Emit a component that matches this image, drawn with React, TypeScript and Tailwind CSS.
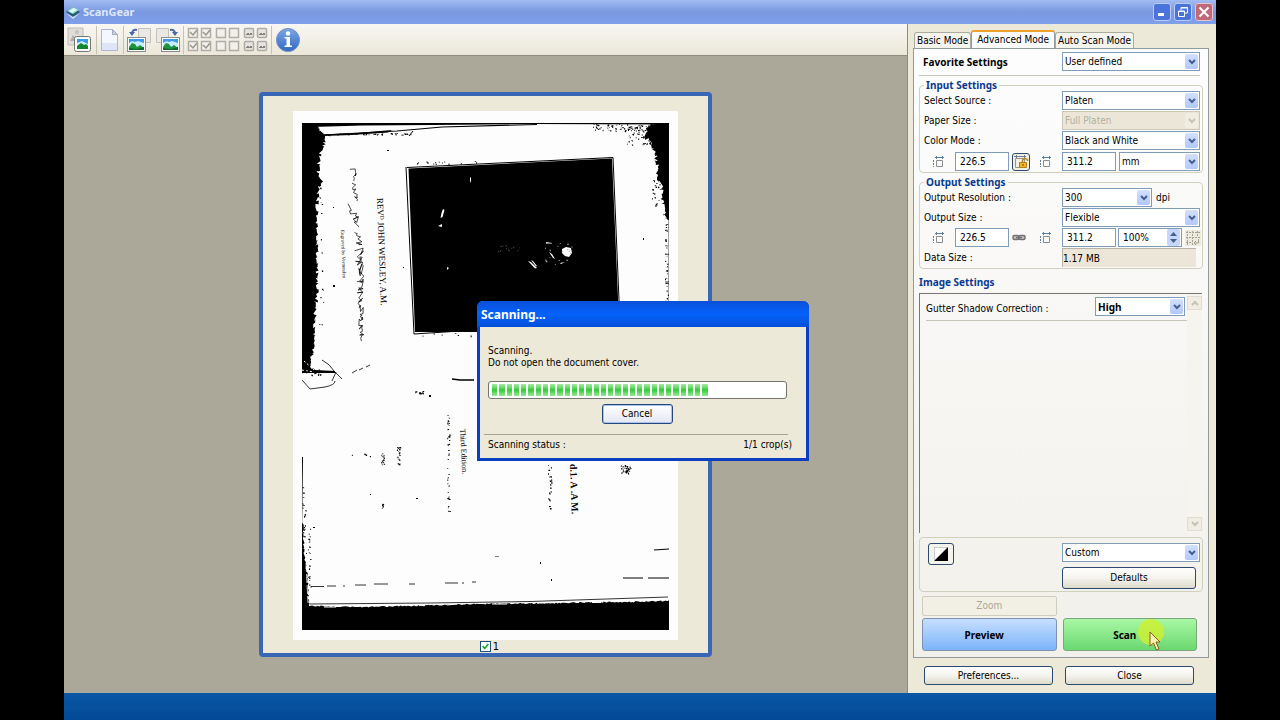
import { useState, type ReactNode } from "react";
import clsx from "clsx";

type Point = [number, number];

// Small seeded generator, so the page noise is the same on each render
const createRandom = (seed: number) => () => {
  seed = (seed * 16807) % 2147483647;
  return seed / 2147483647;
};

const roughen = (points: Point[], amount: number, seed: number) => {
  const random = createRandom(seed);
  const out: string[] = [];
  points.slice(0, -1).forEach(([x, y], i) => {
    const [nx, ny] = points[i + 1];
    const steps = Math.max(1, Math.round(Math.hypot(nx - x, ny - y) / 1.5));
    for (let s = 0; s < steps; s++) {
      const px = x + ((nx - x) * s) / steps + (random() - 0.5) * amount;
      const py = y + ((ny - y) * s) / steps + (random() - 0.5) * amount;
      out.push(`${px.toFixed(1)} ${py.toFixed(1)}`);
    }
  });
  const last = points[points.length - 1];
  out.push(`${last[0]} ${last[1]}`);
  return out.join(" L");
};

const specks = (x: number, y: number, w: number, h: number, count: number, seed: number) => {
  const random = createRandom(seed);
  let d = "";
  for (let i = 0; i < count; i++) {
    const sx = x + random() * w;
    const sy = y + random() * h;
    d += `M${sx.toFixed(1)} ${sy.toFixed(1)}h${(0.6 + random() * 1.4).toFixed(1)}v${(0.6 + random()).toFixed(1)}h-1z`;
  }
  return d;
};

const leftEdge = roughen(
  [[13, 3], [22, 10], [24, 17], [17, 32], [16, 52], [21, 57], [16, 65], [15, 95], [15, 129], [15, 162], [13, 195], [12, 225], [8, 240], [13, 247]],
  4,
  11,
);
const rightEdge = roughen(
  [[350, 0], [344, 12], [350, 22], [353, 29], [356, 49], [360, 69], [363, 92], [366, 97]],
  5,
  29,
);
const bottomEdge = roughen([[7, 483], [60, 484], [110, 483], [178, 481], [260, 480], [320, 479], [366, 478]], 1.4, 5);
const lowerLeftEdge = roughen([[1, 400], [2, 430], [5, 450], [7, 482]], 1.6, 41);

// Three strokes of script, from the thin start to the denser end
const script = [
  roughen([[51, 46], [52, 58]], 6, 103),
  roughen([[52, 62], [55, 78]], 4, 107),
  roughen([[50, 82], [57, 104]], 8, 109),
  roughen([[56, 107], [58, 122]], 7, 113),
  roughen([[57, 126], [59, 160]], 9, 127),
  roughen([[58, 160], [60, 217]], 6, 131),
];

const noise = [
  specks(291, 1, 58, 7, 75, 3),
  specks(325, 6, 25, 16, 50, 7),
  specks(350, 20, 10, 65, 34, 13),
  specks(363, 95, 3, 90, 44, 17),
  specks(0, 246, 18, 6, 24, 19),
  specks(17, 58, 4, 180, 16, 23),
  specks(20, 10, 90, 2, 40, 31),
  specks(145, 284, 2, 105, 38, 37),
  specks(79, 330, 3, 14, 14, 43),
  specks(95, 320, 3, 22, 18, 47),
  specks(80, 378, 2, 7, 6, 53),
  specks(246, 340, 3, 47, 26, 59),
  specks(319, 342, 9, 8, 34, 61),
  specks(6, 405, 2, 60, 22, 67),
  specks(0, 360, 3, 60, 20, 71),
  specks(50, 330, 20, 3, 4, 73),
  specks(113, 267, 8, 4, 14, 79),
  specks(120, 210, 50, 3, 6, 83),
  specks(115, 38, 60, 3, 16, 89),
].join("");

const ScannedPage = () => (
  <svg viewBox="0 0 367 507" className="block w-full" role="img" aria-label="Scanned page">
    <rect width="367" height="507" fill="#fefdfe" />
    {/* dark borders of the glass */}
    <path d={`M0 0H13L${leftEdge} L33 248 V250 H0z`} />
    <path d={`M367 0 L${rightEdge} L367 97z`} />
    <path d={`M0 507 V482 L${bottomEdge} L367 477 V507z`} />
    <path d={`M0 334 H1 L${lowerLeftEdge} L7 490 H0z`} />
    <path d="M0 0H367V1.4L230 1 130 2 60 2.5 10 4z" />
    <path d="M12 8L20 11.5 55 10 90 7 86 9.5 50 12 21 13z" />
    <g fill="none" stroke="#000">
      <path d="M20 12L95 8 140 4 235 1.5" strokeWidth="1.2" />
      <path d="M107 13l4-5" />
      <path d="M366.5 60V182" strokeWidth=".6" opacity=".6" />
      <path d="M366.5 480V506" />
      <path d="M20 237q8 4 12 11l8 8M33 258q0 4-10 6l-15 2-8-9M50 250l5-3M57 247l4-2M64 244l4-2M34 249l-4 9" strokeWidth=".8" />
      <path d="M0 247l12 2M2 238l10 9" stroke="#fff" strokeDasharray="2 2" />
      <path d="M150 256l8 1h14" strokeWidth="1.5" />
      <path d="M9 463.5h13M25 463h9M41 463h2M53 462h11M72 461h14M107 461h6M143 460h13M160 460h2M170 459h4" strokeWidth=".8" />
      <path d="M321 455h20M346 455h21M352 427l15-1" />
      <path d="M4 440l2 40" stroke="#fff" strokeWidth=".8" strokeDasharray="9 2" />
      <path d="M8 481l120-1 100-1.5 138-4.5" strokeWidth=".8" />
      <path d="M22 484h12M60 483h8M145 482l10-1M190 481h15M290 479.5h9M310 478l40-1" stroke="#fff" />
    </g>
    {/* portrait plate */}
    <path d="M103 43L313 33 320 212 111 212z" fill="#fefdfe" />
    <path d="M105 44.500l206-10 7.500 178M104 44l8 167 62-4" fill="none" stroke="#000" />
    <path d="M106.5 45.5L310 35.5 317.5 209 113 209z" />
    <g fill="#fff">
      <path d="M141 86l1.5 1-2 7-2 1 1-5zM138 102l2-1v3l-4-1zM168 54l1 1v5l-1-2zM145 144l2 1-2 2z" />
      <path d="M260 126l4-2 5 1 1 5-3 4-4-1-3-3zM226 138l3 1 6 6-2 .5zM229 137l2 1 4 5-1 .5zM247 129l3 2 3 5-2-1zM258 140l5-1-4 2zM244 119l6 1v.6h-6z" />
    </g>
    <path d={specks(196, 122, 22, 8, 14, 97)} fill="#444" />
    <path d={specks(243, 118, 27, 24, 16, 101)} fill="#aaa" />
    <path d={noise} />
    {/* handwriting */}
    {script.map((stroke) => (
      <path key={stroke} d={`M${stroke}`} fill="none" stroke="#000" strokeWidth=".7" />
    ))}
    <g className="font-['Liberation_Serif',serif]">
      <text transform="translate(75 75) rotate(88)" fontSize="9">REVᴰ JOHN WESLEY, A.M.</text>
      <text transform="translate(39 107) rotate(88)" fontSize="5">Engraved by Vermeulen</text>
      <text transform="translate(158 306) rotate(87)" fontSize="8">Third Edition.</text>
      <text transform="translate(268 341) rotate(88)" fontSize="10" fontWeight="bold">d.1. A  .A  M.</text>
    </g>
    <path d="M31 84h1v1h-1zM31 162h2v2h-2zM85 27h2v1h-2zM101 144h1v1h-1zM127 272h2v2h-2zM193 433h4v.6h-4zM238 439h1v2h-1zM249 456h1v2h-1zM11 404h2v1h-2zM4 430h1v1h-1zM68 371h1v1h-1zM114 375h2v1h-2zM341 115h1v2h-1z" />
  </svg>
);

const MiniPicture = ({ x, y }: { x: number; y: number }) => (
  <g transform={`translate(${x} ${y})`}>
    <rect x=".5" y=".5" width="18" height="14" fill="#fff" stroke="#8c8c8c" />
    <rect x="2" y="2" width="15" height="11" fill="#3c9ae6" />
    <path d="M2 6q3-3 6-1l3-1 6 2v4H2z" fill="#c9ecfb" />
    <path d="M2 10l3-4 3 1 2 3 3-2 4 3v2H2z" fill="#1d9440" />
    <path d="M2 13v-2l8 1 7-2v3z" fill="#0c6a2c" />
  </g>
);

const PreviewIcon = () => (
  <svg width="26" height="28" viewBox="0 0 26 28" fill="none">
    <path d="M1 2h15v17H1z" fill="#dfdcda" stroke="#c0bbb8" />
    <path d="M3 15l3-6 3 4 2-2 4 4z" fill="#b3adab" />
    <circle cx="10" cy="6" r="2" fill="#c5c0be" />
    <rect x="7.5" y="10.5" width="16" height="15" rx="2" fill="#fff" stroke="#777" />
    <path d="M10 13h11v10H10z" fill="#3b9ae5" />
    <path d="M10 17l5-2 6 3v5H10z" fill="#cdeafa" />
    <path d="M10 20l4-3 3 2 2-1 2 2v3H10z" fill="#13862f" />
  </svg>
);

const PageIcon = () => (
  <svg width="20" height="24" viewBox="0 0 20 24" fill="none">
    <path d="M1.500 1.500h11l5 5v16h-16z" fill="#f5f7ff" stroke="#b0b7cb" />
    <path d="M2 15h15v7H2z" fill="#dfe5f8" />
    <path d="M12.500 1.500v5h5z" fill="#c7d0ec" stroke="#a3abc4" />
  </svg>
);

const RotateIcon = ({ flip }: { flip?: boolean }) => (
  <svg width="25" height="26" viewBox="0 0 25 26" fill="none">
    <g transform={flip ? "translate(25 0) scale(-1 1)" : undefined}>
      <path d="M11.5 1.5h12v14h-12z" fill="#e9e8e6" stroke="#c4c1bb" />
      <path d="M10 3Q5 2 5 7" stroke="#4966a5" strokeWidth="2" />
      <path d="M2 5l3 4 3-4z" fill="#4966a5" />
    </g>
    <MiniPicture x={flip ? 6 : 0} y={10} />
  </svg>
);

const GridIcon = ({ kind }: { kind: "check" | "empty" | "filled" }) => (
  <svg width="25" height="26" viewBox="0 0 25 26" fill="none" stroke="#b0ada6">
    {[1, 14].map((y) =>
      [1, 14].map((x) => (
        <g key={`${x}-${y}`} transform={`translate(${x} ${y})`}>
          <rect x=".5" y=".5" width="9" height="9" rx={kind === "filled" ? 1 : 0} fill={kind === "filled" ? "#e6e4de" : "#f2f0ea"} strokeWidth="1.5" />
          {kind === "check" && <path d="M2 4l3 3 4-5" stroke="#98958e" strokeWidth="1.5" />}
          {kind === "filled" && <path d="M2 6.500h6M3 5.500h2M6 5.500h2" stroke="#85827b" />}
        </g>
      )),
    )}
  </svg>
);

const InfoIcon = () => (
  <svg width="26" height="26" viewBox="0 0 26 26">
    <defs>
      <linearGradient id="info" x1="0" y1="0" x2="0" y2="1">
        <stop offset="0" stopColor="#7fa6e4" />
        <stop offset="1" stopColor="#2f68c4" />
      </linearGradient>
    </defs>
    <circle cx="13" cy="13" r="11.5" fill="url(#info)" stroke="#6d8fc6" />
    <circle cx="13" cy="6.5" r="2.2" fill="#fff" />
    <path d="M9.5 10h5.500v8.500h2V20H9.500v-1.500h2v-7h-2z" fill="#fff" />
  </svg>
);

const SizeIcon = () => (
  <svg width="12" height="13" viewBox="0 0 12 13" fill="none" stroke="#8a8f94">
    <path d="M4.500 5.500h6v6h-6z" />
    <path d="M3 2.500h9" stroke="#5d7f99" />
    <path d="M4.500 1v3M10.500 1v3" stroke="#5d7f99" />
    <path d="M1.500 5v7" stroke="#5d7f99" strokeDasharray="2 1" />
  </svg>
);

const ChainIcon = () => (
  <svg width="14" height="8" viewBox="0 0 14 8" fill="none" stroke="#717171" strokeWidth="1.5">
    <rect x="1" y="1.5" width="6" height="4" rx="1.5" fill="#c5c5c5" />
    <rect x="7" y="1.5" width="6" height="4" rx="1.5" fill="#c5c5c5" />
    <path d="M4 3.500h6" />
  </svg>
);

const Separator = () => <span className="h-7 w-px bg-[#c5c2b6]" />;

const ToolButton = ({ label, children }: { label: string; children: ReactNode }) => (
  <button type="button" aria-label={label} className="flex items-center justify-center">
    {children}
  </button>
);

const Toolbar = () => (
  <div className="flex h-8 items-center gap-[3px] border-b border-[#8f8b7e] bg-linear-to-b from-[#f8f7f2] to-[#ebe7d9] pl-[3px]">
    <ToolButton label="Preview thumbnails"><PreviewIcon /></ToolButton>
    <Separator />
    <ToolButton label="Clear page"><PageIcon /></ToolButton>
    <Separator />
    <ToolButton label="Rotate left"><RotateIcon /></ToolButton>
    <ToolButton label="Rotate right"><RotateIcon flip /></ToolButton>
    <Separator />
    <ToolButton label="Check all"><GridIcon kind="check" /></ToolButton>
    <ToolButton label="Uncheck all"><GridIcon kind="empty" /></ToolButton>
    <ToolButton label="Select all crops"><GridIcon kind="filled" /></ToolButton>
    <Separator />
    <ToolButton label="Information"><InfoIcon /></ToolButton>
  </div>
);

const TitleBar = () => (
  <header className="flex h-6 items-center gap-0.5 bg-linear-to-b from-[#a3bbf2] via-[#7a98e0] to-[#7f9fec] px-px">
    <svg width="16" height="16" viewBox="0 0 16 16">
      <path d="M1 8l7-5 7 5-7 5z" fill="#2a5b73" />
      <path d="M2 7l6-4 6 3-6 4z" fill="#8fd6c9" />
      <path d="M4 7l5-3 3 2-5 3z" fill="#e5fff5" />
      <path d="M1 9l7 4 7-4-7 6z" fill="#cfe0ef" />
    </svg>
    <h1 className="flex-1 font-['Noto_Sans',sans-serif] text-[11px] font-bold text-[#dce6fb]">ScanGear</h1>
    <div className="flex gap-[3px]">
      <button type="button" aria-label="Minimize" className="flex size-[18px] items-end rounded-[3px] border border-[#b9cdf8] bg-[#4a74dc] p-1">
        <span className="h-[3px] w-1.5 bg-white" />
      </button>
      <button type="button" aria-label="Restore" className="flex size-[18px] items-center justify-center rounded-[3px] border border-[#b9cdf8] bg-[#4a74dc]">
        <svg width="12" height="12" viewBox="0 0 12 12" fill="none" stroke="#fff">
          <path d="M4 4V1.5h6.500V7H8M4 2h6.500M1.500 5h6v5.500h-6zM1.500 5.500h6" />
        </svg>
      </button>
      <button type="button" aria-label="Close window" className="mr-0.5 flex size-[18px] items-center justify-center rounded-[3px] border border-[#e3c5d3] bg-[#bf6a78]">
        <svg width="12" height="12" viewBox="0 0 12 12" stroke="#fff" strokeWidth="2">
          <path d="M1.5 1.5l9 9M10.5 1.5l-9 9" />
        </svg>
      </button>
    </div>
  </header>
);

interface SelectProps {
  id: string;
  label?: string;
  options: string[];
  disabled?: boolean;
  className?: string;
}

const Select = ({ id, label, options, disabled, className }: SelectProps) => (
  <div className={clsx("relative h-[19px]", className)}>
    <select
      id={id}
      aria-label={label}
      disabled={disabled}
      className={clsx(
        "h-full w-full appearance-none border pl-0.5 pr-4",
        disabled ? "border-[#cbc8b8] bg-[#ece6d8] text-[#b4af9f]" : "border-[#7f9db9] bg-white",
      )}
    >
      {options.map((option) => (
        <option key={option}>{option}</option>
      ))}
    </select>
    <span
      className={clsx(
        "pointer-events-none absolute inset-y-0.5 right-0.5 flex w-[13px] items-center justify-center rounded-xs",
        disabled ? "bg-[#f0ede2]" : "bg-linear-to-b from-[#d3e0fe] to-[#b3c8f8]",
      )}
    >
      <svg width="8" height="6" viewBox="0 0 8 6" fill="none" stroke={disabled ? "#c6c2b4" : "#44618f"} strokeWidth="2">
        <path d="M1 1l3 3 3-3" />
      </svg>
    </span>
  </div>
);

const Row = ({ id, label, children }: { id: string; label: string; children: ReactNode }) => (
  <div className="flex h-[19px] items-center">
    <label htmlFor={id} className="w-[142px] pl-1">{label}</label>
    {children}
  </div>
);

const Group = ({ title, children }: { title: string; children: ReactNode }) => (
  <fieldset className="rounded-sm border border-[#d0d0bf]">
    <legend className="ml-1 px-0.5 font-['Noto_Sans',sans-serif] text-[10px] leading-[10px] font-bold text-[#0a3a8f]">{title}</legend>
    <div className="flex flex-col gap-px py-px">{children}</div>
  </fieldset>
);

const SizeInput = ({ label, value }: { label: string; value: string }) => (
  <input aria-label={label} defaultValue={value} className="h-[19px] w-[54px] border border-[#7f9db9] bg-white pl-1" />
);

const xpButton =
  "flex items-center justify-center rounded-[3px] border border-[#2c4a6b] bg-linear-to-b from-white via-[#f4f3ee] to-[#dedacb]";

const tabs = ["Basic Mode", "Advanced Mode", "Auto Scan Mode"];

const SettingsPanel = () => {
  const [activeTab, setActiveTab] = useState("Advanced Mode");

  return (
    <aside className="flex w-[309px] flex-col border-l border-[#8f8b7e] bg-[#ece9d8] pt-1.5 pr-[7px] pb-2 pl-[5px]">
      <div role="tablist" className="flex h-[18px] items-end px-px">
        {tabs.map((tab) => (
          <button
            key={tab}
            type="button"
            role="tab"
            aria-selected={tab === activeTab}
            onClick={() => setActiveTab(tab)}
            className={clsx(
              "rounded-t-[3px] border border-b-0 whitespace-nowrap",
              tab === activeTab
                ? "h-[18px] border-[#919b9c] border-t-2 border-t-[#f0a02c] bg-[#fcfcfe] px-[5px]"
                : "h-4 border-[#a9ab9f] bg-[#f4f3ec] px-0.5",
            )}
          >
            {tab}
          </button>
        ))}
      </div>

      <div className="flex flex-1 flex-col border border-[#919b9c] bg-linear-to-b from-[#fdfdfe] to-[#f2f0ea] px-[5px] pt-[3px] pb-1.5">
        <div className="mr-[3px] flex items-center border-b border-[#c9c7ba] pb-1">
          <label htmlFor="favorite" className="w-[143px] pl-1 font-['Noto_Sans',sans-serif] text-[10px] font-bold">Favorite Settings</label>
          <Select id="favorite" options={["User defined"]} className="flex-1" />
        </div>

        <div className="mt-1 flex flex-col gap-1">
          <Group title="Input Settings">
            <Row id="source" label="Select Source :"><Select id="source" options={["Platen"]} className="mr-0.5 flex-1" /></Row>
            <Row id="paper" label="Paper Size :"><Select id="paper" options={["Full Platen"]} disabled className="mr-0.5 flex-1" /></Row>
            <Row id="color" label="Color Mode :"><Select id="color" options={["Black and White", "Grayscale", "Color"]} className="mr-0.5 flex-1" /></Row>
            <div className="flex items-center pt-px">
              <div className="flex w-[142px] items-center gap-[3px] pl-3">
                <SizeIcon />
                <span className="ml-2"><SizeInput label="Input width" value="226.5" /></span>
                <button type="button" aria-label="Change aspect ratio" className="flex size-[18px] items-center justify-center rounded-[3px] border border-[#2c4a6b] bg-[#f4efe0]">
                  <svg width="16" height="16" viewBox="0 0 16 16" fill="none" stroke="#77736a">
                    <path d="M2.5 4.5h9v9h-9z" stroke="#9a968c" />
                    <path d="M1 2.5h12M3.500 1v3M11.500 1v3" stroke="#6f7d8c" />
                    <path d="M9.500 8V6q2.500-3 5 0v1" stroke="#b8861a" strokeWidth="1.5" />
                    <path d="M6.5 8.5h7v5h-7z" fill="#f2b42b" stroke="#b37d10" />
                    <path d="M10 10v2" stroke="#6e4d05" />
                  </svg>
                </button>
                <span className="ml-1.5"><SizeIcon /></span>
              </div>
              <SizeInput label="Input height" value="311.2" />
              <Select id="unit" label="Unit" options={["mm", "inches", "pixels"]} className="mr-0.5 ml-[3px] flex-1" />
            </div>
          </Group>

          <Group title="Output Settings">
            <Row id="resolution" label="Output Resolution :">
              <Select id="resolution" options={["300", "600"]} className="w-[90px]" />
              <span className="pl-1">dpi</span>
            </Row>
            <Row id="size" label="Output Size :"><Select id="size" options={["Flexible"]} className="mr-0.5 flex-1" /></Row>
            <div className="flex items-center">
              <div className="flex w-[142px] items-center gap-[3px] pl-3">
                <SizeIcon />
                <span className="ml-2"><SizeInput label="Output width" value="226.5" /></span>
                <span className="w-[18px]"><ChainIcon /></span>
                <span className="ml-1.5"><SizeIcon /></span>
              </div>
              <SizeInput label="Output height" value="311.2" />
              <div className="ml-0.5 flex h-[19px] w-16 items-center border border-[#7f9db9] bg-white pr-px">
                <input aria-label="Scale" defaultValue="100%" className="w-0 flex-1 pl-1" />
                <span className="flex w-[13px] flex-col items-center gap-[3px] rounded-xs bg-[#c6d6fc] py-[3px]">
                  <button type="button" aria-label="Increase scale"><svg className="block" width="7" height="4" viewBox="0 0 7 4"><path d="M0 4l3.5-4L7 4z" fill="#44618f" /></svg></button>
                  <button type="button" aria-label="Decrease scale"><svg className="block" width="7" height="4" viewBox="0 0 7 4"><path d="M0 0l3.5 4L7 0z" fill="#44618f" /></svg></button>
                </span>
              </div>
              <button type="button" aria-label="Swap dimensions" className="ml-[3px] flex size-4 items-center justify-center bg-[#ece9dd]">
                <svg width="16" height="16" viewBox="0 0 16 16" fill="none" stroke="#a5a195">
                  <path d="M1 2.5h14M1 7.500h14M1 12.500h6M2.500 1v14M7.500 1v14M12.500 1v6" strokeDasharray="2 1" />
                  <path d="M13.5 9v4h-4M11 11l-2 2 2 2" />
                </svg>
              </button>
            </div>
            <Row id="data" label="Data Size :">
              <output id="data" className="mr-1.5 h-[19px] flex-1 border-t border-l border-[#b8b4a4] bg-[#ece6d8] leading-[19px]">1.17 MB</output>
            </Row>
          </Group>
        </div>

        <h2 className="mt-1.5 mb-[3px] font-['Noto_Sans',sans-serif] text-[10px] leading-[15px] font-bold text-[#0a3a8f]">Image Settings</h2>
        <div className="mr-px flex min-h-40 flex-1 border-t border-l border-[#78776f]">
          <div className="flex-1 pl-1.5 pt-[3px]">
            <div className="flex items-center border-b border-[#c9c7ba] pb-1">
              <label htmlFor="gutter" className="flex-1 pt-1">Gutter Shadow Correction :</label>
              <Select id="gutter" options={["High", "Medium", "Low", "None"]} className="mr-0.5 w-[90px] font-['Noto_Sans',sans-serif] font-bold" />
            </div>
          </div>
          <div className="flex w-[15px] flex-col justify-between bg-[#f5f4ef] py-0.5">
            <button type="button" aria-label="Scroll up" className="flex h-3.5 items-center justify-center border border-[#e0ddd0] bg-[#f0ede2]">
              <svg width="8" height="6" viewBox="0 0 8 6" fill="none" stroke="#c6c2b4" strokeWidth="2"><path d="M1 5l3-3 3 3" /></svg>
            </button>
            <button type="button" aria-label="Scroll down" className="flex h-3.5 items-center justify-center border border-[#e0ddd0] bg-[#f0ede2]">
              <svg width="8" height="6" viewBox="0 0 8 6" fill="none" stroke="#c6c2b4" strokeWidth="2"><path d="M1 1l3 3 3-3" /></svg>
            </button>
          </div>
        </div>

        <div className="mt-1 flex items-start rounded-sm border border-[#d0d0bf] pt-[5px] pb-0.5">
          <div className="w-[142px] pl-2">
            <button type="button" aria-label="Threshold" className="flex h-[22px] w-[26px] items-center justify-center rounded-[3px] border border-[#2c4a6b] bg-[#f4f3ee]">
              <svg width="14" height="14" viewBox="0 0 14 14"><path d="M0 0h14v14H0z" fill="#fff" /><path d="M14 0v14H0z" /><path d="M0 14V0h14" fill="none" stroke="#999" /></svg>
            </button>
          </div>
          <div className="flex flex-1 flex-col gap-[5px]">
            <Select id="preset" label="Preset" options={["Custom"]} className="mr-0.5" />
            <button type="button" className={clsx(xpButton, "mr-1.5 h-[22px]")}>Defaults</button>
          </div>
        </div>

        <div className="mt-1 mr-1.5 ml-[3px] grid grid-cols-2 gap-x-1.5 gap-y-0.5">
          <button type="button" disabled className="col-start-1 h-5 rounded-xs border border-[#cfcdbd] bg-[#f2f0e4] text-[#aaa797]">Zoom</button>
          <button type="button" className="col-start-1 h-[33px] rounded-[3px] border border-[#7f93b0] bg-linear-to-b from-[#c6dffd] to-[#7db3fb] pr-2.5 font-['Noto_Sans',sans-serif] text-[10px] font-bold">Preview</button>
          <button type="button" className="relative h-[33px] rounded-[3px] border border-[#79a77b] bg-linear-to-b from-[#a9f7a5] to-[#6ad870] pr-2.5 font-['Noto_Sans',sans-serif] text-[10px] font-bold">
            <span className="absolute top-0 right-8 size-[26px] rounded-full bg-[#d0f02c]/80" />
            <span className="relative">Scan</span>
            <svg className="absolute top-3 right-[35px]" width="12" height="20" viewBox="0 0 12 20">
              <path d="M1 1v14l3.5-3 3 7 2.500-1-3-7h4z" fill="#fbf3b0" stroke="#8a5a28" />
            </svg>
          </button>
        </div>
      </div>

      <div className="mt-2 mr-[15px] ml-[11px] grid grid-cols-2 gap-x-3">
        <button type="button" className={clsx(xpButton, "h-[19px]")}>Preferences...</button>
        <button type="button" className={clsx(xpButton, "h-[19px]")}>Close</button>
      </div>
    </aside>
  );
};

const ScanningDialog = () => (
  <section role="dialog" aria-labelledby="dialog-title" className="absolute top-[301px] left-[477px] w-[332px] rounded-t-md border-[3px] border-t-0 border-[#0b3fc0] bg-[#ece9d8]">
    <h2 id="dialog-title" className="-mx-[3px] h-[26px] rounded-t-md bg-linear-to-b from-[#0a4fd8] via-[#0562fb] to-[#0350d8] pl-1 font-['Noto_Sans',sans-serif] text-xs leading-[28px] font-bold text-white">
      Scanning...
    </h2>
    <div className="px-2 pt-[18px] pb-1.5">
      <p className="leading-3">Scanning.<br />Do not open the document cover.</p>
      <div className="mt-3 mr-[11px] h-[18px] rounded-[3px] border border-[#75756f] bg-white px-[3px] py-0.5" role="progressbar" aria-label="Scan progress" aria-valuenow={74}>
        <div className="flex h-full w-[74%] gap-0.5">
          {Array.from({ length: 30 }, (_, i) => (
            <span key={i} className="flex-1 bg-linear-to-b from-[#a6eba6] via-[#2bcb35] to-[#97e697]" />
          ))}
        </div>
      </div>
      <div className="mt-[5px] mr-3 flex justify-center">
        <button type="button" className="h-5 w-[71px] rounded-[3px] border border-[#27477c] bg-linear-to-b from-white to-[#e3e7f2] shadow-[inset_0_0_0_1px_#a9c3f0]">Cancel</button>
      </div>
      <div className="-ml-1 mr-2.5 mt-2.5 border-t border-[#a5a294]" />
      <div className="mt-[3px] mr-1.5 flex justify-between">
        <span>Scanning status :</span>
        <span>1/1 crop(s)</span>
      </div>
    </div>
  </section>
);

export default function App() {
  return (
    <div className="relative flex min-h-screen flex-col bg-black px-16 font-['DejaVu_Sans_Condensed','DejaVu_Sans',sans-serif] text-[10px] leading-[14px] text-black">
      <TitleBar />
      <div className="flex flex-1">
        <main className="flex min-w-0 flex-1 flex-col bg-[#aca899]">
          <Toolbar />
          <div className="flex flex-1 items-center justify-center">
            <div className="w-[453px] rounded-sm border-4 border-[#3a67b5] bg-[#ece9d8] px-[30px] pt-[15px]">
              <div className="bg-[#fefdfe] px-[9px] pt-3 pb-2.5">
                <ScannedPage />
              </div>
              <label className="flex h-[13px] items-center justify-center gap-0.5 pl-2 text-[11px]">
                <input type="checkbox" defaultChecked className="peer sr-only" />
                <svg width="11" height="11" viewBox="0 0 11 11" fill="none" className="border border-[#1c5180] bg-white">
                  <path d="M2 5l2.5 3L9 2.500" stroke="#21a121" strokeWidth="2" />
                </svg>
                1
              </label>
            </div>
          </div>
        </main>
        <SettingsPanel />
      </div>
      <footer className="h-[27px] bg-linear-to-b from-[#0a57a5] to-[#034a96]" />
      <ScanningDialog />
    </div>
  );
}
